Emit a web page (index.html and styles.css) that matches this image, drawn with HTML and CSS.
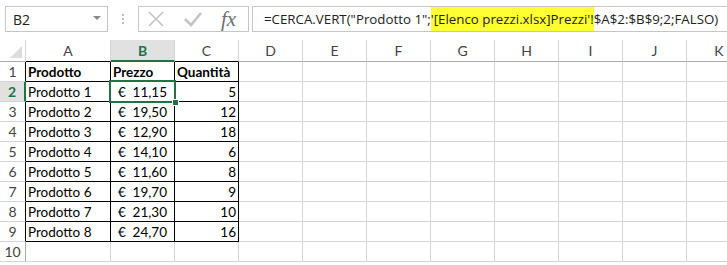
FILE: index.html
```html
<!DOCTYPE html>
<html lang="it">
<head>
  <meta charset="UTF-8">
  <title>Foglio - CERCA.VERT</title>
  <link rel="stylesheet" href="styles.css">
</head>
<body>

  <div class="formula-bar">
    <div class="name-box">
      <span>B2</span>
      <svg class="caret" width="8" height="5" viewBox="0 0 8 5"><path d="M0 0 L8 0 L4 4 Z" fill="#8a8a8a"/></svg>
    </div>
    <div class="grip">
      <i></i><i></i><i></i>
    </div>
    <div class="fx-box">
      <svg width="18" height="16" viewBox="0 0 18 16"><path d="M2 1 L16 15 M16 1 L2 15" stroke="#c4c4c4" stroke-width="1.6" fill="none"/></svg>
      <svg width="18" height="16" viewBox="0 0 18 16"><path d="M1 8 L7 14 L17 2" stroke="#c4c4c4" stroke-width="2.6" fill="none"/></svg>
      <span class="fx">fx</span>
    </div>
    <div class="formula">
      <span class="formula-text">=CERCA.VERT("Prodotto 1";<mark>'[Elenco prezzi.xlsx]Prezzi'!</mark>$A$2:$B$9;2;FALSO)</span>
    </div>
  </div>

  <div class="sheet-wrap">
    <table class="sheet">
      <colgroup>
        <col class="c-rh">
        <col class="c-a">
        <col class="c-std">
        <col class="c-std">
        <col class="c-std">
        <col class="c-std">
        <col class="c-std">
        <col class="c-std">
        <col class="c-std">
        <col class="c-std">
        <col class="c-std">
        <col class="c-std">
      </colgroup>
      <thead>
        <tr>
          <th class="corner"><span class="tri"></span></th>
          <th class="in">A</th>
          <th class="in sel">B</th>
          <th class="in">C</th>
          <th>D</th><th>E</th><th>F</th><th>G</th><th>H</th><th>I</th><th>J</th><th class="last">K</th>
        </tr>
      </thead>
      <tbody id="rows"></tbody>
    </table>
  </div>

  <script>
    const data = [
      ["Prodotto 1", "11,15", 5],
      ["Prodotto 2", "19,50", 12],
      ["Prodotto 3", "12,90", 18],
      ["Prodotto 4", "14,10", 6],
      ["Prodotto 5", "11,60", 8],
      ["Prodotto 6", "19,70", 9],
      ["Prodotto 7", "21,30", 10],
      ["Prodotto 8", "24,70", 16]
    ];

    const rows = document.getElementById('rows');
    const empty = '<td></td>'.repeat(7) + '<td class="last"></td>';

    let html = `<tr>
      <th class="rh in">1</th>
      <td class="in b">Prodotto</td>
      <td class="in b">Prezzo</td>
      <td class="in b">Quantità</td>${empty}</tr>`;

    data.forEach((r, i) => {
      const n = i + 2;
      const sel = n === 2;
      html += `<tr>
        <th class="rh in${sel ? ' sel' : ''}">${n}</th>
        <td class="in">${r[0]}</td>
        <td class="in${sel ? ' active' : ''}"><div class="money"><span>€</span><span>${r[1]}</span></div></td>
        <td class="in num">${r[2]}</td>${empty}</tr>`;
    });

    html += `<tr><th class="rh">10</th>${'<td></td>'.repeat(3)}${empty}</tr>`;
    rows.innerHTML = html;
  </script>

</body>
</html>
```

FILE: styles.css
```css
:root {
  --green: #217346;
  --grid: #d4d4d4;
  --head-line: #ababab;
  --cell-font: 'Lato', 'Liberation Sans', sans-serif;
  --ui-font: 'Open Sans', 'Liberation Sans', sans-serif;
}

body {
  margin: 0;
  background: #fff;
  color: #000;
  overflow: hidden;
}

/* formula bar */

.formula-bar {
  display: flex;
  align-items: center;
  height: 26px;
  padding: 6px 0 8px 5px;
  font-family: var(--ui-font);
}

.name-box {
  box-sizing: border-box;
  width: 103px;
  height: 26px;
  border: 1px solid #c6c6c6;
  display: flex;
  align-items: center;
  justify-content: space-between;
  padding: 0 6px 0 7px;
  font-size: 14px;
  color: #222;
}

.caret {
  margin-top: -2px;
}

.grip {
  width: 30px;
  display: flex;
  flex-direction: column;
  align-items: center;
  gap: 2px;
}

.grip i {
  width: 2px;
  height: 2px;
  background: #bdbdbd;
}

.fx-box {
  box-sizing: border-box;
  width: 111px;
  height: 26px;
  border: 1px solid #c6c6c6;
  display: flex;
  align-items: center;
  gap: 19px;
  padding-left: 8px;
}

.fx {
  font-family: 'Liberation Serif', serif;
  font-style: italic;
  font-size: 21px;
  color: #707070;
}

.formula {
  box-sizing: border-box;
  flex: 1;
  height: 26px;
  margin-left: 3px;
  border: 1px solid #c6c6c6;
  border-right: none;
  padding-left: 11px;
  display: flex;
  align-items: center;
  font-size: 13.3px;
  color: #222;
  overflow: hidden;
}

.formula-text {
  white-space: nowrap;
}

.formula mark {
  background: #ffff33;
  color: #222;
  padding: 5px 0;
}

/* sheet */

.sheet-wrap {
  overflow: hidden;
}

.sheet {
  table-layout: fixed;
  border-collapse: separate;
  border-spacing: 0;
  width: 751px;
  font-family: var(--cell-font);
  font-size: 13.5px;
}

.c-rh { width: 26px; }
.c-a { width: 85px; }
.c-std { width: 64px; }

th, td {
  box-sizing: border-box;
  padding: 0 2px;
  border-right: 1px solid var(--grid);
  border-bottom: 1px solid var(--grid);
  white-space: nowrap;
  overflow: hidden;
  height: 20px;
}

thead th {
  height: 22px;
  font-weight: normal;
  color: #444;
  font-size: 14px;
  border-bottom-color: var(--head-line);
  border-right-color: var(--grid);
}

thead th.sel {
  background: #e1e1e1;
  color: var(--green);
  font-weight: bold;
  border-bottom: 2px solid var(--green);
}

.corner {
  position: relative;
}

.tri {
  position: absolute;
  right: 3px;
  bottom: 3px;
  width: 0;
  height: 0;
  border-left: 12px solid transparent;
  border-bottom: 12px solid #dcdcdc;
}

.rh {
  font-weight: normal;
  color: #444;
  font-size: 14px;
  text-align: center;
  padding: 0;
  border-right-color: var(--head-line);
}

.rh.in {
  border-right-color: #000;
}

.rh.sel {
  background: #e1e1e1;
  color: var(--green);
  font-weight: bold;
  border-right: 2px solid var(--green);
}

td.in {
  border-right-color: #000;
  border-bottom-color: #000;
}

thead th.in {
  border-bottom-color: #000;
}

thead th.in.sel {
  border-bottom-color: var(--green);
}

.b {
  font-weight: bold;
}

.num {
  text-align: right;
  padding-right: 2px;
}

.money {
  display: flex;
  justify-content: space-between;
  padding: 0 5px 0 5px;
}

td.active {
  position: relative;
  overflow: visible;
}

td.active::after {
  content: "";
  position: absolute;
  left: -2px;
  top: -2px;
  right: -2px;
  bottom: -2px;
  border: 2px solid var(--green);
}

td.active::before {
  content: "";
  position: absolute;
  right: -5px;
  bottom: -5px;
  width: 5px;
  height: 5px;
  background: var(--green);
  border: 1px solid #fff;
  z-index: 1;
}

.last {
  border-right: none;
}
```
